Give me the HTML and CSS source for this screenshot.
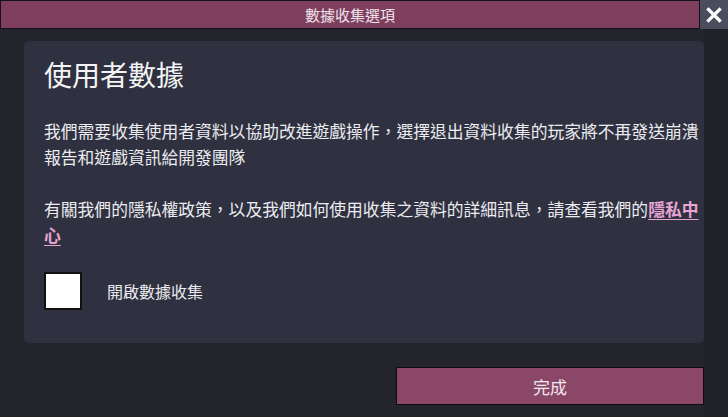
FILE: index.html
```html
<!DOCTYPE html>
<html lang="zh-Hant">
<head>
<meta charset="utf-8">
<link rel="stylesheet" href="styles.css">
</head>
<body>
<div class="screen">
  <header class="titlebar">
    <div class="title">數據收集選項</div>
    <button class="close" aria-label="關閉">
      <svg width="16" height="16" viewBox="0 0 16 16"><path d="M2.5 2.5 L13.5 13.5 M13.5 2.5 L2.5 13.5" stroke="#fff" stroke-width="3.2" stroke-linecap="square"/></svg>
    </button>
  </header>
  <div class="body">
    <main class="content">
      <section class="panel">
        <h1 class="heading">使用者數據</h1>
        <p class="text">我們需要收集使用者資料以協助改進遊戲操作，選擇退出資料收集的玩家將不再發送崩潰報告和遊戲資訊給開發團隊</p>
        <p class="text">有關我們的隱私權政策，以及我們如何使用收集之資料的詳細訊息，請查看我們的<a class="link" href="#">隱私中心</a></p>
        <label class="option">
          <span class="checkbox"></span>
          <span class="option-label">開啟數據收集</span>
        </label>
      </section>
      <div class="actions">
        <button class="done">完成</button>
      </div>
    </main>
    <aside class="rail"></aside>
  </div>
</div>
</body>
</html>
```
FILE: styles.css
```css
* { box-sizing: border-box; }
html, body { margin: 0; padding: 0; }
body {
  width: 728px;
  height: 417px;
  overflow: hidden;
  background: #23242c;
  font-family: "Noto Sans CJK TC", "Noto Sans", sans-serif;
  color: #ececf0;
}
.screen { display: flex; flex-direction: column; height: 417px; }
.titlebar { display: flex; height: 29px; flex: none; }
.title {
  flex: 1;
  background: #7e3f5f;
  border: 1px solid #14121a;
  display: flex; align-items: center; justify-content: center;
  font-size: 15px;
  color: #eee3ea;
}
.close {
  width: 28px;
  border: none;
  padding: 0;
  background: #4a4d5e;
  display: flex; align-items: center; justify-content: center;
}
.body { flex: 1; display: flex; }
.content { flex: 1; padding: 12px 0 0 24px; display: flex; flex-direction: column; }
.rail { width: 24px; background: #202128; }
.panel {
  background: #2f3140;
  border-radius: 5px;
  height: 302px;
  padding: 12px 2px 0 20px;
}
.heading {
  margin: 0;
  font-size: 28px;
  font-weight: 400;
  line-height: 42px;
  color: #f4f4f6;
}
.text {
  margin: 23px 0 0 0;
  font-size: 16.8px;
  line-height: 26px;
}
.text + .text { margin-top: 26px; }
.link { color: #e6a4d4; font-weight: 700; text-decoration: underline; text-underline-offset: 3px; }
.option { display: flex; align-items: center; margin-top: 24px; }
.checkbox {
  width: 38px; height: 38px;
  background: #fff;
  border: 2px solid #111;
}
.option-label { margin-left: 25px; font-size: 16px; }
.actions { display: flex; justify-content: flex-end; padding-top: 24px; }
.done {
  width: 308px; height: 38px;
  background: #8b4767;
  border: 1px solid #0d0b10;
  color: #f3e8ef;
  font-family: inherit;
  font-size: 17px;
}
```
